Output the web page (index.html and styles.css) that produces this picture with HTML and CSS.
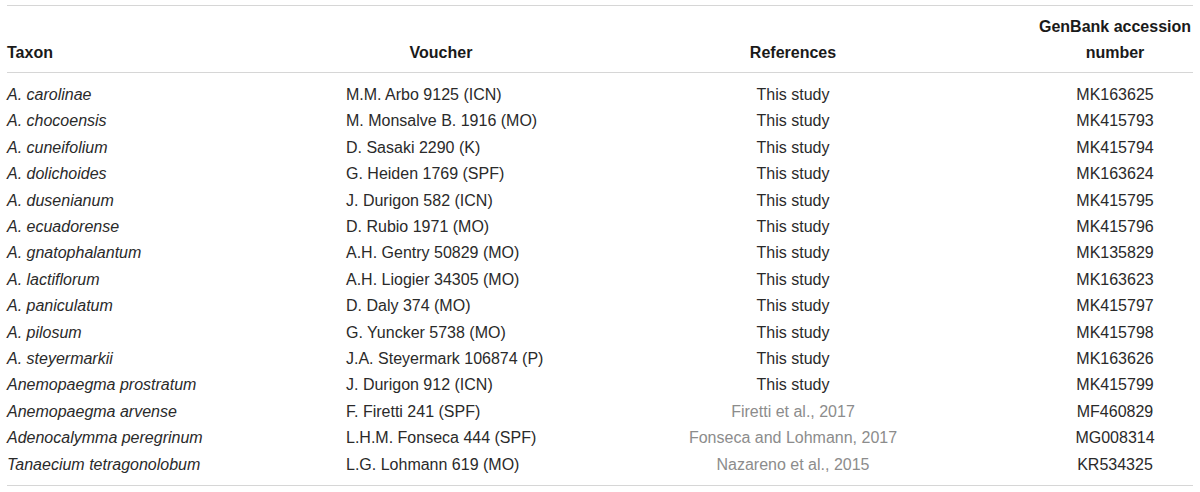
FILE: index.html
```html
<!DOCTYPE html>
<html>
<head>
<meta charset="utf-8">
<link rel="stylesheet" href="styles.css">
</head>
<body>
<div class="wrap">
<table class="tbl">
<colgroup>
<col class="c-taxon"><col class="c-voucher"><col class="c-ref"><col class="c-gb">
</colgroup>
<thead>
<tr>
<th class="taxon">Taxon</th>
<th class="voucher">Voucher</th>
<th class="ref">References</th>
<th class="gb">GenBank accession number</th>
</tr>
</thead>
<tbody>
<tr><td class="taxon">A. carolinae</td><td class="voucher">M.M. Arbo 9125 (ICN)</td><td class="ref">This study</td><td class="gb">MK163625</td></tr>
<tr><td class="taxon">A. chocoensis</td><td class="voucher">M. Monsalve B. 1916 (MO)</td><td class="ref">This study</td><td class="gb">MK415793</td></tr>
<tr><td class="taxon">A. cuneifolium</td><td class="voucher">D. Sasaki 2290 (K)</td><td class="ref">This study</td><td class="gb">MK415794</td></tr>
<tr><td class="taxon">A. dolichoides</td><td class="voucher">G. Heiden 1769 (SPF)</td><td class="ref">This study</td><td class="gb">MK163624</td></tr>
<tr><td class="taxon">A. dusenianum</td><td class="voucher">J. Durigon 582 (ICN)</td><td class="ref">This study</td><td class="gb">MK415795</td></tr>
<tr><td class="taxon">A. ecuadorense</td><td class="voucher">D. Rubio 1971 (MO)</td><td class="ref">This study</td><td class="gb">MK415796</td></tr>
<tr><td class="taxon">A. gnatophalantum</td><td class="voucher">A.H. Gentry 50829 (MO)</td><td class="ref">This study</td><td class="gb">MK135829</td></tr>
<tr><td class="taxon">A. lactiflorum</td><td class="voucher">A.H. Liogier 34305 (MO)</td><td class="ref">This study</td><td class="gb">MK163623</td></tr>
<tr><td class="taxon">A. paniculatum</td><td class="voucher">D. Daly 374 (MO)</td><td class="ref">This study</td><td class="gb">MK415797</td></tr>
<tr><td class="taxon">A. pilosum</td><td class="voucher">G. Yuncker 5738 (MO)</td><td class="ref">This study</td><td class="gb">MK415798</td></tr>
<tr><td class="taxon">A. steyermarkii</td><td class="voucher">J.A. Steyermark 106874 (P)</td><td class="ref">This study</td><td class="gb">MK163626</td></tr>
<tr><td class="taxon">Anemopaegma prostratum</td><td class="voucher">J. Durigon 912 (ICN)</td><td class="ref">This study</td><td class="gb">MK415799</td></tr>
<tr><td class="taxon">Anemopaegma arvense</td><td class="voucher">F. Firetti 241 (SPF)</td><td class="ref cite">Firetti et al., 2017</td><td class="gb">MF460829</td></tr>
<tr><td class="taxon">Adenocalymma peregrinum</td><td class="voucher">L.H.M. Fonseca 444 (SPF)</td><td class="ref cite">Fonseca and Lohmann, 2017</td><td class="gb">MG008314</td></tr>
<tr><td class="taxon">Tanaecium tetragonolobum</td><td class="voucher">L.G. Lohmann 619 (MO)</td><td class="ref cite">Nazareno et al., 2015</td><td class="gb">KR534325</td></tr>
</tbody>
</table>
</div>
</body>
</html>
```

FILE: styles.css
```css
html, body {
  margin: 0;
  padding: 0;
  background: #ffffff;
}

.wrap {
  padding: 5px 7px 0 7px;
}

.tbl {
  width: 1186px;
  border-collapse: collapse;
  table-layout: fixed;
  font-family: "Liberation Sans", Arial, sans-serif;
  font-size: 16px;
  color: #2a2a2a;
  border-top: 1px solid #d6d6d6;
  border-bottom: 1px solid #d6d6d6;
}

.c-taxon { width: 339px; }
.c-voucher { width: 200px; }
.c-ref { width: 491px; }
.c-gb { width: 156px; }

.tbl th {
  font-weight: bold;
  font-size: 16px;
  color: #1a1a1a;
  line-height: 26px;
  vertical-align: bottom;
  padding: 8px 0 6px 0;
  border-bottom: 1px solid #d6d6d6;
}

.tbl td {
  padding: 0;
  line-height: 26.4px;
  white-space: nowrap;
  vertical-align: top;
}

.tbl tbody tr:first-child td {
  padding-top: 9px;
}

.tbl tbody tr:last-child td {
  padding-bottom: 7px;
}

.tbl .taxon {
  text-align: left;
}

.tbl td.taxon {
  font-style: italic;
}

.tbl th.voucher {
  text-align: center;
  padding-right: 10px;
}

.tbl td.voucher {
  text-align: left;
}

.tbl .ref {
  text-align: center;
  padding-left: 3px;
}

.tbl .gb {
  text-align: center;
}

.tbl td.cite {
  color: #8c8c8c;
}
```
